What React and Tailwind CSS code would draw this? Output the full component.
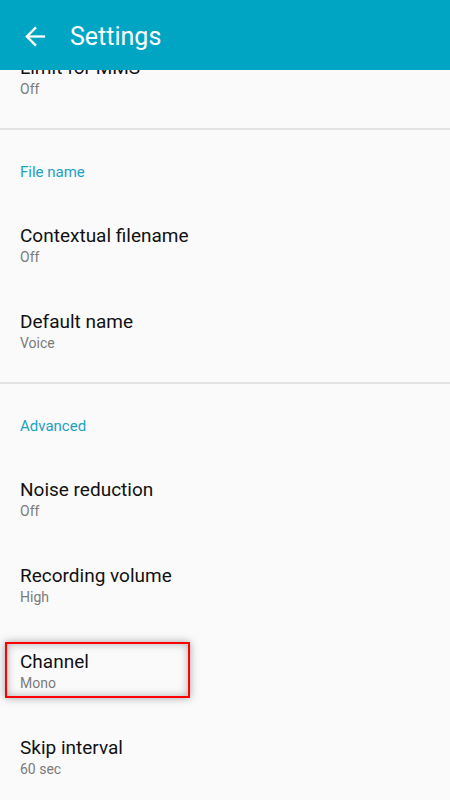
import React from 'react';

const sections = [
  {
    title: 'File name',
    items: [
      { label: 'Contextual filename', value: 'Off' },
      { label: 'Default name', value: 'Voice' },
    ],
  },
  {
    title: 'Advanced',
    items: [
      { label: 'Noise reduction', value: 'Off' },
      { label: 'Recording volume', value: 'High' },
      { label: 'Channel', value: 'Mono', highlighted: true },
      { label: 'Skip interval', value: '60 sec' },
    ],
  },
];

function SettingItem({ label, value, highlighted }) {
  return (
    <div className="relative px-5 pt-[21px] pb-[21px]">
      <p className="text-[19px] leading-[25px] text-[#111111]">{label}</p>
      <p className="text-[14px] leading-[19px] text-[#7a7a7a]">{value}</p>
      {highlighted && (
        <div className="pointer-events-none absolute left-[5px] top-[14px] h-[56px] w-[185px] border-2 border-[#ff0000] shadow-[0_0_8px_rgba(0,0,0,0.35),inset_0_0_8px_rgba(0,0,0,0.3)]" />
      )}
    </div>
  );
}

function Divider() {
  return <div className="mt-[8px] h-[2px] bg-[#e2e2e2]" />;
}

export default function App() {
  return (
    <div
      className="h-[800px] w-[450px] overflow-hidden bg-[#fafafa]"
      style={{ fontFamily: 'Roboto, "Noto Sans", sans-serif' }}
    >
      <header className="relative z-10 flex h-[70px] items-center bg-[#01a5c4] pt-[3px]">
        <svg className="ml-[24px]" width="23" height="23" viewBox="0 0 24 24" fill="none" stroke="white" strokeWidth="2.4">
          <path d="M22 12H3" />
          <path d="M12.5 2.5L3 12l9.5 9.5" />
        </svg>
        <h1 className="ml-[23px] text-[25px] leading-none text-white">Settings</h1>
      </header>

      <div className="-mt-[36px]">
        <SettingItem label="Limit for MMS" value="Off" />
        <Divider />
        {sections.map((section, index) => (
          <section key={section.title}>
            <h2 className="px-5 pt-[31px] pb-[19px] text-[15px] leading-[22px] text-[#1ba2c2]">{section.title}</h2>
            {section.items.map((item) => (
              <SettingItem key={item.label} {...item} />
            ))}
            {index < sections.length - 1 && <Divider />}
          </section>
        ))}
      </div>
    </div>
  );
}
